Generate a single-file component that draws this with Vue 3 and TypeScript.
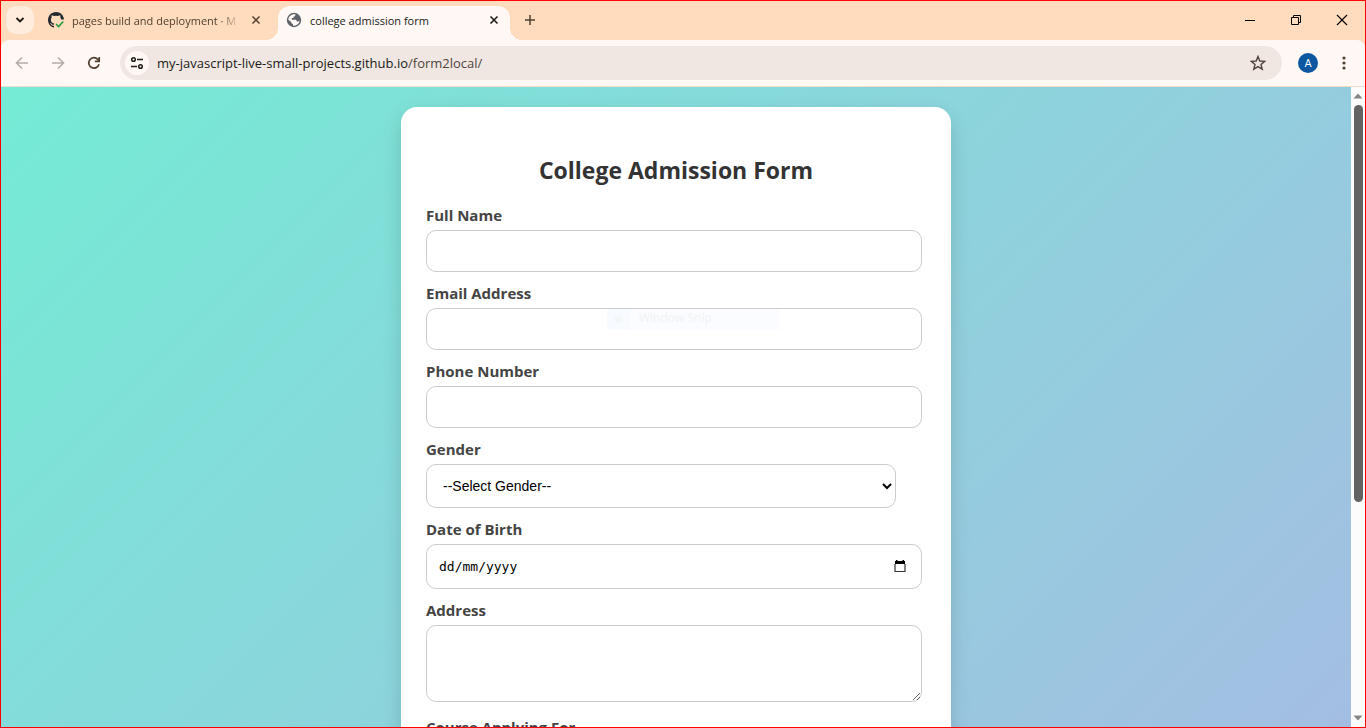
<script setup lang="ts">
import { ref } from 'vue'

const gender = ref('')
const course = ref('')
const birth = ref('')
const textFields = [
  { id: 'name', label: 'Full Name', type: 'text' },
  { id: 'email', label: 'Email Address', type: 'email' },
  { id: 'phone', label: 'Phone Number', type: 'tel' },
]
</script>

<template>
  <div class="window">
    <header class="tabstrip">
      <button class="tab-search" aria-label="Search tabs">
        <svg width="10" height="6" viewBox="0 0 10 6"><path d="M1.5 1 5 4.5 8.500 1" fill="none" stroke="#201a16" stroke-width="1.800" /></svg>
      </button>
      <div class="tab">
        <svg class="favicon" width="16" height="16" viewBox="0 0 16 16">
          <path d="M8 0C3.600 0 0 3.600 0 8c0 3.500 2.300 6.500 5.500 7.600.4.1.5-.2.5-.4v-1.500c-2.200.5-2.700-.9-2.700-.9-.4-.9-.9-1.200-.9-1.200-.7-.5.1-.5.1-.5.8.1 1.200.8 1.200.8.7 1.200 1.900.9 2.300.7.1-.5.3-.9.5-1.100-1.800-.2-3.600-.9-3.600-4 0-.9.3-1.600.8-2.100-.1-.2-.4-1 .1-2.100 0 0 .7-.2 2.200.8a7.500 7.500 0 0 1 4 0c1.500-1 2.200-.8 2.200-.8.4 1.100.2 1.900.1 2.100.5.6.8 1.300.8 2.100h2.900C15.800 3.500 12.400 0 8 0z" fill="#24292f" />
          <path d="m8 12 2.600 2.600L15.300 9.500" fill="none" stroke="#1f9a3d" stroke-width="1.500" />
        </svg>
        <span class="tab-title faded">pages build and deployment · M</span>
        <button class="close" aria-label="Close tab">
          <svg width="10" height="10" viewBox="0 0 10 10"><path d="M1.500 1.500 8.500 8.500M8.500 1.500 1.500 8.500" stroke="#51402f" stroke-width="1.500" /></svg>
        </button>
      </div>
      <div class="tab active">
        <svg class="favicon" width="16" height="16" viewBox="0 0 16 16">
          <circle cx="8" cy="8" r="7.200" fill="#5f6368" />
          <path d="M2.200 7.700C2.500 5 4.500 2.800 7.200 2.300h2.200c.2 1.500-.5 2.300-1.900 2.400v1.300H5.800v1.700h3.300c1.300 0 1.600.7 1.600 1.700h1.600c.8 0 .9-.5 1.300-.9-.2 2.700-2.300 4.800-4.900 5.200H7V12c-1.200 0-1.800-.8-1.800-2z" fill="#fff8f5" />
        </svg>
        <span class="tab-title">college admission form</span>
        <button class="close" aria-label="Close tab">
          <svg width="10" height="10" viewBox="0 0 10 10"><path d="M1.500 1.500 8.500 8.500M8.500 1.500 1.500 8.500" stroke="#201a16" stroke-width="1.600" /></svg>
        </button>
      </div>
      <button class="new-tab" aria-label="New tab">
        <svg width="12" height="12" viewBox="0 0 12 12"><path d="M6 1v10M1 6h10" stroke="#51402f" stroke-width="1.500" /></svg>
      </button>
      <div class="window-controls">
        <button aria-label="Minimize"><svg width="12" height="12" viewBox="0 0 12 12"><path d="M1 6.500h10" stroke="#000" /></svg></button>
        <button aria-label="Restore"><svg width="12" height="12" viewBox="0 0 12 12"><path d="M1.500 3.500h7v7h-7zM3.500 3.500v-2h7v7h-2" fill="none" stroke="#000" /></svg></button>
        <button aria-label="Close"><svg width="12" height="12" viewBox="0 0 12 12"><path d="m1 1 10 10M11 1 1 11" stroke="#000" stroke-width="1.100" /></svg></button>
      </div>
    </header>

    <div class="toolbar-back">
      <nav class="toolbar" aria-label="Browser toolbar">
        <button class="tool" aria-label="Back">
          <svg width="16" height="16" viewBox="0 0 16 16"><path d="M14 8H3M8 2.500 2.500 8 8 13.500" fill="none" stroke="#b5aca7" stroke-width="1.600" /></svg>
        </button>
        <button class="tool" aria-label="Forward">
          <svg width="16" height="16" viewBox="0 0 16 16"><path d="M2 8h11M8 2.500 13.500 8 8 13.500" fill="none" stroke="#b5aca7" stroke-width="1.600" /></svg>
        </button>
        <button class="tool" aria-label="Reload">
          <svg width="16" height="16" viewBox="0 0 16 16"><path d="M13 9.200A5.200 5.200 0 1 1 11.900 4.500L13.300 6M13.200 2v4.400H8.800" fill="none" stroke="#51402f" stroke-width="1.700" /></svg>
        </button>
        <div class="omnibox">
          <button class="site-info" aria-label="Site information">
            <svg width="14" height="14" viewBox="0 0 14 14"><g fill="none" stroke="#201a16" stroke-width="1.500"><circle cx="3.500" cy="3.500" r="1.800" /><path d="M7 3.500h6M1 10.500h6" /><circle cx="10.500" cy="10.500" r="1.800" /></g></svg>
          </button>
          <a class="url" href="#">my-javascript-live-small-projects.github.io<span>/form2local/</span></a>
          <button class="star" aria-label="Bookmark this tab">
            <svg width="16" height="16" viewBox="0 0 16 16"><path d="m8 1.500 1.800 4.500 4.900.4-3.700 3.100 1.200 4.700L8 11.600l-4.200 2.600L5 9.500 1.300 6.400 6.200 6z" fill="none" stroke="#51443d" stroke-width="1.400" /></svg>
          </button>
        </div>
        <button class="avatar" aria-label="Profile">A</button>
        <button class="menu" aria-label="Browser menu">
          <svg width="4" height="14" viewBox="0 0 4 14"><g fill="#51402f"><circle cx="2" cy="2" r="1.600" /><circle cx="2" cy="7" r="1.600" /><circle cx="2" cy="12" r="1.600" /></g></svg>
        </button>
      </nav>
    </div>

    <div class="viewport">
      <main class="page">
        <form class="card" @submit.prevent>
          <h2>College Admission Form</h2>
          <div v-for="f in textFields" :key="f.id" class="field">
            <label :for="f.id">{{ f.label }}</label>
            <input :id="f.id" :type="f.type" class="control" />
            <div v-if="f.id === 'email'" class="snip"><i></i><span>Window Snip</span></div>
          </div>
          <div class="field">
            <label for="gender">Gender</label>
            <select id="gender" v-model="gender">
              <option value="">--Select Gender--</option>
            </select>
          </div>
          <div class="field">
            <label for="birth">Date of Birth</label>
            <div class="control date">
              <input id="birth" v-model="birth" type="text" placeholder="dd/mm/yyyy" />
              <button type="button" aria-label="Choose date">
                <svg width="12" height="14" viewBox="0 0 12 14"><path d="M2 0h1.500v1h5V0H10v1h1v3H1V1h1z" fill="#000" /><path d="M1 4v7.500h10V4" fill="none" stroke="#333" stroke-width="1.200" /></svg>
              </button>
            </div>
          </div>
          <div class="field address">
            <label for="address">Address</label>
            <textarea id="address" class="control"></textarea>
          </div>
          <div class="field">
            <label for="course">Course Applying For</label>
            <select id="course" v-model="course"></select>
          </div>
        </form>
      </main>
      <div class="scrollbar" aria-hidden="true">
        <svg width="10" height="6" viewBox="0 0 10 6"><path d="M0.500 5.500 5 0.500 9.500 5.500z" fill="#858585" /></svg>
        <div class="track"><div class="thumb"></div></div>
        <svg width="10" height="6" viewBox="0 0 10 6"><path d="M0.500 0.500 5 5.500 9.500 0.500z" fill="#858585" /></svg>
      </div>
    </div>
  </div>
</template>

<style>
html, body, #app { height: 100%; }
body { margin: 0; overflow: hidden; }
</style>

<style scoped>
* { box-sizing: border-box; }
.window {
  display: flex;
  flex-direction: column;
  height: 100vh;
  border: 1px solid #f00;
  font-family: "Segoe UI", "Open Sans", "Noto Sans", sans-serif;
  overflow: hidden;
}
button {
  display: flex;
  align-items: center;
  justify-content: center;
  flex: none;
  padding: 0;
  border: 0;
  background: none;
}
svg { display: block; flex: none; }

.tabstrip {
  display: flex;
  height: 39px;
  flex: none;
  padding: 5px 0 0 5px;
  background: #ffdcbd;
}
.tab-search { width: 28px; height: 28px; border-radius: 10px; background: #ffecdd; }
.tab {
  display: flex;
  align-items: center;
  width: 238px;
  height: 34px;
  padding: 0 14px 6px 8px;
  margin-left: 6px;
  color: #51402f;
  font-size: 11px;
}
.tab.active {
  position: relative;
  width: 232px;
  margin-left: 0;
  padding-right: 8px;
  background: #fff8f5;
  border-radius: 12px 12px 0 0;
  color: #201a16;
}
.tab.active::before,
.tab.active::after {
  content: "";
  position: absolute;
  bottom: 0;
  width: 12px;
  height: 12px;
}
.tab.active::before { right: 100%; background: radial-gradient(circle at 0 0, transparent 12px, #fff8f5 12px); }
.tab.active::after { left: 100%; background: radial-gradient(circle at 100% 0, transparent 12px, #fff8f5 12px); }
.tab-title { flex: 1; margin-left: 8px; white-space: nowrap; }
.faded { mask-image: linear-gradient(90deg, #000 88%, transparent); }
.close { width: 16px; height: 16px; margin-left: 8px; }
.new-tab { width: 28px; height: 28px; margin-left: 6px; }
.window-controls { display: flex; margin-left: auto; }
.window-controls button { width: 46px; height: 28px; }

.toolbar-back { flex: none; background: #ffdcbd; }
.toolbar {
  display: flex;
  align-items: center;
  height: 47px;
  padding-left: 3px;
  border-radius: 8px 8px 0 0;
  border-bottom: 1px solid #f0dccb;
  background: #fff8f5;
}
.tool { width: 36px; height: 34px; }
.omnibox {
  display: flex;
  align-items: center;
  flex: 1;
  height: 34px;
  margin-left: 8px;
  padding: 0 16px 0 5px;
  border-radius: 17px;
  background: #f0e7e2;
}
.site-info { width: 24px; height: 24px; border-radius: 12px; background: #fff8f5; }
.url { flex: 1; margin-left: 8px; color: #201a16; font-size: 13px; text-decoration: none; white-space: nowrap; }
.url span { color: #51443d; }
.avatar {
  width: 20px;
  height: 20px;
  margin: 0 16px;
  border-radius: 10px;
  background: #0b57a0;
  color: #fff;
  font: 11px Roboto, sans-serif;
}
.menu { width: 20px; height: 28px; margin: 0 11px 0 0; }

.viewport { display: flex; flex: 1; min-height: 0; }
.page {
  flex: 1;
  overflow: auto;
  scrollbar-width: none;
  padding: 20px;
  background: linear-gradient(135deg, #74ebd5, #acb6e5) 0 0 / 100% 978px;
}
.card {
  width: 100%;
  max-width: 550px;
  min-height: 938px;
  margin: 0 auto;
  padding: 47px 25px 25px;
  border-radius: 16px;
  background: #fff;
  box-shadow: 0 8px 20px rgba(0, 0, 0, 0.15);
}
h2 { margin: 0 0 19px; color: #333; font-size: 23px; line-height: 32px; text-align: center; }
.field { position: relative; margin-bottom: 11px; }
.field.address { margin-bottom: 15px; }
label { display: block; margin-bottom: 4px; color: #444; font-size: 15px; font-weight: 700; line-height: 21px; }
.control, select {
  display: block;
  width: calc(94% + 26px);
  height: 42px;
  padding: 12px;
  border: 1px solid #ccc;
  border-radius: 10px;
  background: #fff;
  color: #000;
  font: 14px "Liberation Sans", Arial, sans-serif;
  outline: none;
}
select { width: 94%; height: 44px; }
textarea.control { height: 77px; }
.control.date { display: flex; align-items: center; height: 45px; padding: 0 15px 0 12px; }
.date input {
  flex: 1;
  min-width: 0;
  padding: 0;
  border: 0;
  outline: none;
  font: 13px Consolas, "DejaVu Sans Mono", monospace;
}
.date input::placeholder { color: #000; opacity: 1; }
.snip {
  position: absolute;
  left: 181px;
  top: 26px;
  display: flex;
  width: 173px;
  height: 21px;
  background: #fafcff;
  color: #f2f3f4;
  font-size: 12px;
  line-height: 18px;
  pointer-events: none;
}
.snip i { width: 22px; height: 21px; background: radial-gradient(circle, #f4f5f6 3px, #f7fbff 4px); }
.snip span { margin-left: 10px; }

.scrollbar {
  display: flex;
  flex-direction: column;
  align-items: center;
  width: 14px;
  padding: 6px 0;
  background: #fcfcfc;
}
.track { flex: 1; width: 9px; margin: 6px 0; }
.thumb { height: 65.7%; border-radius: 5px; background: #636363; }
</style>
